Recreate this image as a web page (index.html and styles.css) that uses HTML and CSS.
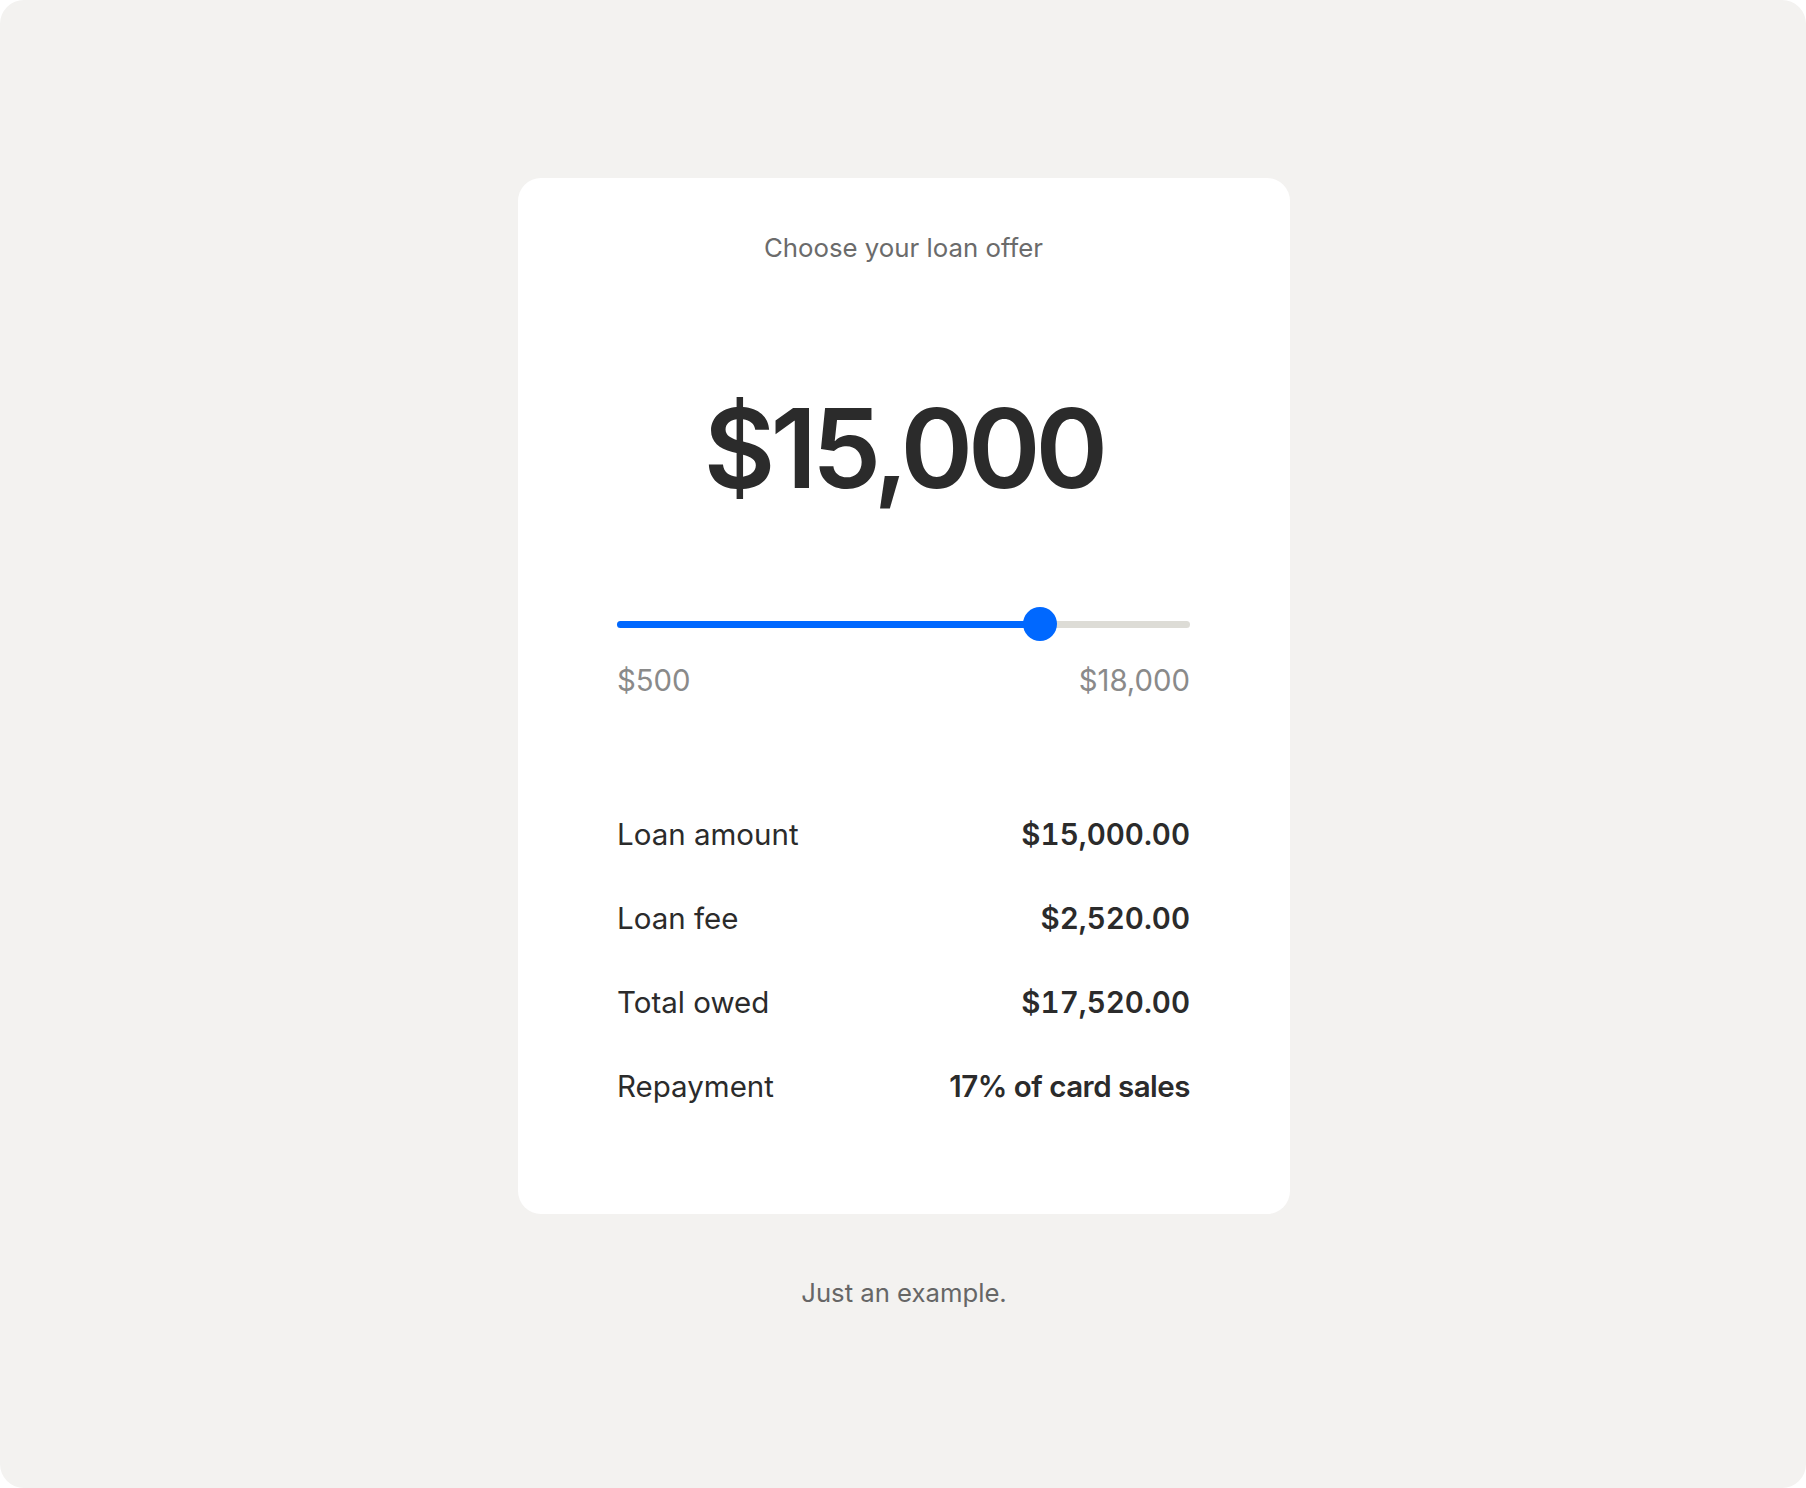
FILE: index.html
```html
<!DOCTYPE html>
<html lang="en">
<head>
<meta charset="utf-8">
<title>Choose your loan offer</title>
<link rel="stylesheet" href="styles.css">
</head>
<body>
<div class="page">
  <section class="card">
    <h1 class="title">Choose your loan offer</h1>
    <div class="amount">$15,000</div>
    <div class="slider">
      <div class="track">
        <div class="fill" style="width: 73.8%"></div>
        <div class="thumb" style="left: 73.8%"></div>
      </div>
    </div>
    <div class="range">
      <span>$500</span>
      <span>$18,000</span>
    </div>
    <dl class="details">
      <div class="row"><dt>Loan amount</dt><dd class="num">$15,000.00</dd></div>
      <div class="row"><dt>Loan fee</dt><dd class="num">$2,520.00</dd></div>
      <div class="row"><dt>Total owed</dt><dd class="num">$17,520.00</dd></div>
      <div class="row"><dt>Repayment</dt><dd class="text">17% of card sales</dd></div>
    </dl>
  </section>
  <p class="note">Just an example.</p>
</div>
</body>
</html>
```

FILE: styles.css
```css
* { box-sizing: border-box; }
html, body { margin: 0; padding: 0; background: #ffffff; }
body { font-family: Inter, "Liberation Sans", sans-serif; }

.page {
  height: 1488px;
  background: #f3f2f0;
  border-radius: 24px;
  display: flex;
  flex-direction: column;
  align-items: center;
  padding-top: 178px;
  padding-left: 2px;
}

.card {
  width: 772px;
  background: #ffffff;
  border-radius: 23px;
  padding: 55px 100px 86px 99px;
  display: flex;
  flex-direction: column;
}

.title {
  margin: 0;
  font-size: 25.8px;
  line-height: 30px;
  font-weight: 400;
  color: #6b6b6b;
  text-align: center;
}

.amount {
  margin-top: 115px;
  font-size: 110px;
  line-height: 140px;
  font-weight: 600;
  letter-spacing: -5px;
  color: #2b2b2b;
  text-align: center;
}

.slider {
  margin-top: 89px;
  height: 34px;
  display: flex;
  align-items: center;
}

.track {
  position: relative;
  width: 100%;
  height: 7px;
  border-radius: 4px;
  background: #dddcd6;
}

.fill {
  height: 100%;
  border-radius: 4px;
  background: #0068ff;
}

.thumb {
  position: absolute;
  top: 50%;
  width: 34px;
  height: 34px;
  margin: -17px 0 0 -17px;
  border-radius: 50%;
  background: #0068ff;
}

.range {
  margin-top: 24px;
  display: flex;
  justify-content: space-between;
  font-size: 29.3px;
  line-height: 32px;
  color: #8a8a8a;
}

.details {
  margin: 95px 0 0 0;
}

.row {
  height: 84px;
  display: flex;
  align-items: center;
  justify-content: space-between;
  font-size: 29.5px;
  color: #2b2b2b;
}

.row dt { font-weight: 400; }
.row dd { margin: 0; font-weight: 600; }
.row .num { font-variant-numeric: tabular-nums; }
.row .text { letter-spacing: -0.5px; }

.note {
  margin: 64px 0 0 0;
  font-size: 25.7px;
  line-height: 30px;
  color: #666666;
}
```
